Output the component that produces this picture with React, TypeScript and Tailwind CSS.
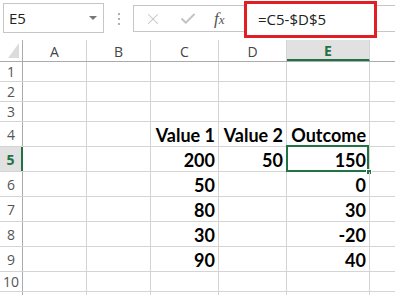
import { X, Check } from 'lucide-react'

const cols = ['A', 'B', 'C', 'D', 'E']
const colWidths = ['w-[64px]', 'w-[64px]', 'w-[68px]', 'w-[68px]', 'w-[83px]']

const rows = [
  { n: '1', h: 'h-[20px]', cells: ['', '', '', '', ''] },
  { n: '2', h: 'h-[20px]', cells: ['', '', '', '', ''] },
  { n: '3', h: 'h-[20px]', cells: ['', '', '', '', ''] },
  { n: '4', h: 'h-[25px]', cells: ['', '', 'Value 1', 'Value 2', 'Outcome'] },
  { n: '5', h: 'h-[25px]', cells: ['', '', '200', '50', '150'] },
  { n: '6', h: 'h-[25px]', cells: ['', '', '50', '', '0'] },
  { n: '7', h: 'h-[25px]', cells: ['', '', '80', '', '30'] },
  { n: '8', h: 'h-[25px]', cells: ['', '', '30', '', '-20'] },
  { n: '9', h: 'h-[25px]', cells: ['', '', '90', '', '40'] },
  { n: '10', h: 'h-[20px]', cells: ['', '', '', '', ''] },
  { n: '', h: 'h-[20px]', cells: ['', '', '', '', ''] },
]

const cellFont = { fontFamily: 'Lato, "Liberation Sans", sans-serif' }
const uiFont = { fontFamily: '"Open Sans", "Noto Sans", sans-serif' }

function FormulaBar() {
  return (
    <div className="flex h-[40px] items-start bg-white" style={uiFont}>
      <div className="ml-[3px] mt-[3px] flex h-[30px] w-[101px] items-center justify-between border border-[#c6c6c6] pl-[5px] pr-[6px]">
        <span className="text-[15px] text-[#222]">E5</span>
        <span className="h-0 w-0 border-x-[4px] border-t-[4px] border-x-transparent border-t-[#777]" />
      </div>
      <div className="ml-[14px] mt-[13px] flex flex-col gap-[3px]">
        <span className="h-[2px] w-[2px] bg-[#b0b0b0]" />
        <span className="h-[2px] w-[2px] bg-[#b0b0b0]" />
        <span className="h-[2px] w-[2px] bg-[#b0b0b0]" />
      </div>
      <div className="ml-[13px] mt-[5px] flex h-[27px] flex-1 items-center border-y border-l border-[#c6c6c6]">
        <div className="flex w-[110px] items-center">
          <X className="ml-[10px] h-[18px] w-[18px] text-[#c4c4c4]" strokeWidth={1.4} />
          <Check className="ml-[17px] h-[18px] w-[18px] text-[#c4c4c4]" strokeWidth={2.6} />
          <span
            className="ml-[17px] text-[17px] italic text-[#555]"
            style={{ fontFamily: '"Liberation Serif", serif' }}
          >
            f<span className="text-[13px]">x</span>
          </span>
        </div>
      </div>
      <div className="absolute left-[244px] top-[1px] flex h-[37px] w-[133px] items-center border-[3px] border-[#e21d24] bg-white pl-[11px]">
        <span className="text-[15px] text-[#222]">=C5-$D$5</span>
      </div>
    </div>
  )
}

function Grid() {
  return (
    <div className="flex flex-col">
      <div className="flex h-[22px] border-b border-[#ababab]" style={uiFont}>
        <div className="relative w-[23px] border-r border-[#ababab]">
          <div className="absolute bottom-[3px] right-[3px] h-0 w-0 border-b-[15px] border-l-[11px] border-b-[#dcdcdc] border-l-transparent" />
        </div>
        {cols.map((c, i) =>
          c === 'E' ? (
            <div
              key={c}
              className={`${colWidths[i]} flex items-center justify-center border-b-2 border-r border-b-[#217346] border-r-[#d4d4d4] bg-[#e1e1e1] pt-[2px] text-[14px] font-bold text-[#217346]`}
            >
              {c}
            </div>
          ) : (
            <div
              key={c}
              className={`${colWidths[i]} flex items-center justify-center border-r border-[#d4d4d4] pt-[2px] text-[14px] text-[#444]`}
            >
              {c}
            </div>
          )
        )}
        <div className="flex-1" />
      </div>
      {rows.map((r, idx) => (
        <div key={idx} className={`flex ${r.h} border-b border-[#d4d4d4]`}>
          {r.n === '5' ? (
            <div
              className="flex w-[23px] items-center justify-center border-r-2 border-[#217346] bg-[#e1e1e1] text-[14px] font-bold text-[#217346]"
              style={uiFont}
            >
              {r.n}
            </div>
          ) : (
            <div
              className="flex w-[23px] items-center justify-center border-r border-[#ababab] text-[14px] text-[#555]"
              style={uiFont}
            >
              {r.n}
            </div>
          )}
          {r.cells.map((v, i) => (
            <div
              key={i}
              className={`relative ${colWidths[i]} flex items-end justify-end border-r border-[#d4d4d4] pb-[2px] pr-[3px] text-[18px] font-bold leading-none text-black`}
              style={cellFont}
            >
              {v}
              {r.n === '5' && i === 4 && (
                <>
                  <div className="absolute -bottom-[1px] -left-[1px] -right-[0px] -top-[2px] border-2 border-[#217346]" />
                  <div className="absolute -bottom-[4px] -right-[3px] h-[6px] w-[6px] border border-white bg-[#217346]" />
                </>
              )}
            </div>
          ))}
          <div className="flex-1" />
        </div>
      ))}
    </div>
  )
}

export default function App() {
  return (
    <div className="relative h-[295px] w-[395px] overflow-hidden bg-white">
      <FormulaBar />
      <Grid />
    </div>
  )
}
